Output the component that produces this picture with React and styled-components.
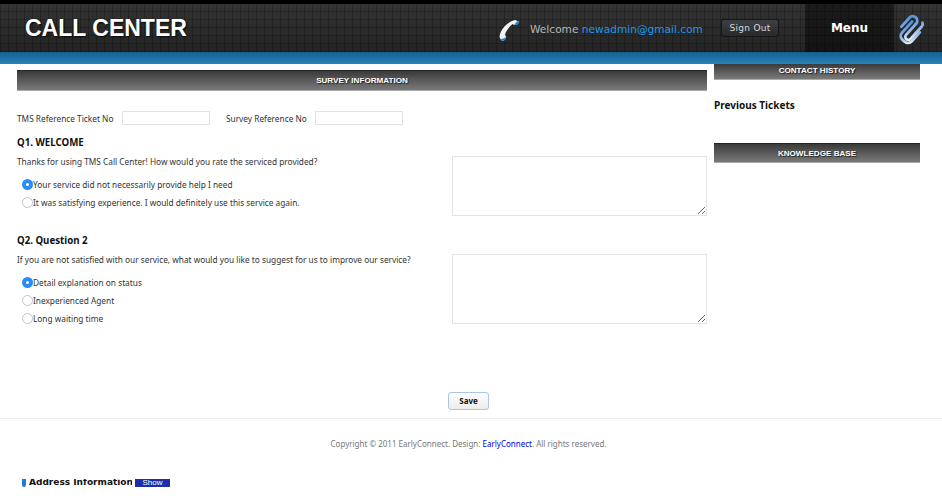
import React from 'react';
import styled, { createGlobalStyle } from 'styled-components';

const GlobalStyle = createGlobalStyle`
  html, body {
    margin: 0;
    padding: 0;
    background: #ffffff;
  }
  body {
    font-family: "Noto Sans", Verdana, sans-serif;
    font-size: 8.3px;
    color: #333333;
    height: 500px;
    overflow: hidden;
  }
`;

const Header = styled.header`
  border-top: 4px solid #000000;
`;

const TopBar = styled.div`
  height: 48px;
  display: flex;
  align-items: stretch;
  background-color: #262626;
  background-image:
    repeating-linear-gradient(90deg, rgba(0, 0, 0, 0.22) 0 1px, transparent 1px 8px),
    repeating-linear-gradient(0deg, rgba(0, 0, 0, 0.22) 0 1px, transparent 1px 8px),
    linear-gradient(180deg, #333333, #242424);
`;

const BlueBand = styled.div`
  height: 12px;
  background: linear-gradient(180deg, #14608f, #2b80bb);
`;

const Title = styled.h1`
  margin: 0 0 0 25px;
  width: 473px;
  align-self: center;
  font: bold 23px/30px "Liberation Sans", Arial, sans-serif;
  color: #ffffff;
  text-shadow: 1px 1px 2px rgba(0, 0, 0, 0.8);
`;

const PhoneIcon = styled.svg`
  width: 22px;
  height: 24px;
  margin: 15px 10px 0 0;
  flex: none;
`;

const Welcome = styled.div`
  width: 191px;
  align-self: center;
  font-family: "DejaVu Sans", Verdana, sans-serif;
  font-size: 10.6px;
  color: #b5b5b5;
  white-space: nowrap;
  padding-top: 1px;

  span {
    color: #1c96f0;
  }
`;

const SignOut = styled.button`
  width: 58px;
  height: 18px;
  align-self: center;
  padding: 0;
  border: 1px solid #151515;
  border-radius: 3px;
  background: linear-gradient(180deg, #3d4045, #26282c);
  color: #d8d8d8;
  font-family: "DejaVu Sans", Verdana, sans-serif;
  font-size: 9px;
  letter-spacing: 0.3px;
`;

const MenuCell = styled.div`
  width: 89px;
  margin-left: 26px;
  display: flex;
  align-items: center;
  justify-content: center;
  background: rgba(0, 0, 0, 0.45);
  color: #ffffff;
  font-family: "DejaVu Sans", Verdana, sans-serif;
  font-size: 12px;
  font-weight: bold;
`;

const ClipIcon = styled.svg`
  width: 32px;
  height: 32px;
  margin: 9px 0 0 1px;
  flex: none;
`;

const Main = styled.main`
  display: flex;
  gap: 7px;
  margin-left: 17px;
`;

const LeftColumn = styled.section`
  width: 690px;
  padding-top: 6px;
`;

const RightColumn = styled.aside`
  width: 206px;
`;

const SectionBar = styled.div`
  height: ${({ $height }) => $height}px;
  text-align: center;
  box-sizing: border-box;
  border-top: ${({ $flat }) => ($flat ? '0' : '1px solid #222222')};
  border-bottom: 1px solid #aaaaaa;
  background: linear-gradient(180deg, #3a3a3a, #7a7a7a);
  color: #ffffff;
  font: bold 8.1px "Liberation Sans", Arial, sans-serif;
  line-height: ${({ $lineHeight }) => $lineHeight}px;
  text-shadow: 1px 1px 1px rgba(0, 0, 0, 0.7);
`;

const RefRow = styled.div`
  display: flex;
  align-items: center;
  height: 14px;
  margin-top: 20px;
  white-space: nowrap;
`;

const RefLabel = styled.label`
  width: ${({ $width }) => $width}px;
  flex: none;
`;

const RefInput = styled.input`
  box-sizing: border-box;
  height: 14px;
  width: ${({ $width }) => $width}px;
  margin: 0 16px 0 0;
  padding: 0;
  border: 1px solid #e2e2e2;
  background: #ffffff;
`;

const QuestionGrid = styled.div`
  display: grid;
  grid-template-columns: 435px 255px;
  margin-top: ${({ $top }) => $top}px;
`;

const QuestionTitle = styled.h3`
  margin: 0;
  height: 14px;
  font-size: 9.7px;
  line-height: 16px;
  font-weight: bold;
  color: #111111;
`;

const QuestionText = styled.p`
  margin: 7px 0 7px;
  height: 12px;
  line-height: 12px;
  white-space: nowrap;
`;

const Option = styled.label`
  display: flex;
  align-items: center;
  height: 18px;
  padding-left: 5px;
`;

const Radio = styled.input`
  appearance: none;
  box-sizing: border-box;
  width: 11px;
  height: 11px;
  margin: 0;
  flex: none;
  border-radius: 50%;
  border: 1px solid #c4c4c4;
  background: #ffffff;

  &:checked {
    border: 4px solid #2a8cf4;
  }
`;

const AnswerBox = styled.textarea`
  box-sizing: border-box;
  display: block;
  width: 255px;
  height: ${({ $height }) => $height}px;
  margin-top: ${({ $top }) => $top}px;
  padding: 0;
  border: 1px solid #e4e4e4;
  background: #ffffff;
`;

const SideHeading = styled.h3`
  margin: 19px 0 32px;
  font-size: 10px;
  line-height: 12px;
  color: #111111;
`;

const SaveRow = styled.div`
  display: flex;
  justify-content: center;
  margin-top: 65px;
  width: 937px;
`;

const SaveButton = styled.button`
  box-sizing: border-box;
  width: 41px;
  height: 18px;
  padding: 0 0 2px;
  border: 1px solid #a9c4e4;
  border-radius: 3px;
  background: linear-gradient(180deg, #ffffff, #ececec);
  color: #111111;
  font: bold 8px "Noto Sans", Verdana, sans-serif;
`;

const Footer = styled.footer`
  margin-top: 8px;
  height: 47px;
  line-height: 49px;
  border-top: 1px solid #efefef;
  text-align: center;
  font-size: 8px;
  color: #777777;

  span {
    display: block;
    width: 937px;
  }

  a {
    color: #0000dd;
    text-decoration: none;
  }
`;

const AddressRow = styled.div`
  display: flex;
  align-items: flex-start;
  height: 9px;
  margin: 13px 0 0 22px;
`;

const AddressMark = styled.span`
  width: 4px;
  height: 8px;
  margin-right: 3px;
  border-radius: 0 0 2px 2px;
  background: #1c7fd0;
`;

const AddressTitle = styled.span`
  display: block;
  overflow: hidden;
  width: 103px;
  height: 7px;
  font-family: "DejaVu Sans", Verdana, sans-serif;
  font-size: 9px;
  line-height: 6px;
  font-weight: bold;
  color: #111111;
  white-space: nowrap;
`;

const ShowBadge = styled.span`
  width: 35px;
  height: 8px;
  margin-left: 3px;
  text-align: center;
  background: #1c2fa8;
  color: #ffffff;
  font: 8px/8px "Liberation Sans", Arial, sans-serif;
`;

const App = () => (
  <>
    <GlobalStyle />
    <Header>
      <TopBar>
        <Title>CALL CENTER</Title>
        <PhoneIcon viewBox="0 0 22 24">
          <path d="M1.5 18 C2 11 9 3 17 1 L21 2.5 C21 5 18.5 6.5 16 6 L14.5 5 C11 8 8 12 7 15.5 L8 17.5 C8 20.5 6 22 3.5 22 Z" fill="#f2f2f2" />
          <path d="M16 6 C18.5 6.5 21 5 21 2.5 L19.5 2 Z" fill="#1c7fd0" />
          <path d="M2.5 20.5 L3.5 22 C6 22 7.5 20.5 8 18.5 Z" fill="#1c7fd0" />
        </PhoneIcon>
        <Welcome>Welcome <span>newadmin@gmail.com</span></Welcome>
        <SignOut>Sign Out</SignOut>
        <MenuCell>Menu</MenuCell>
        <ClipIcon viewBox="0 0 32 32" fill="none" strokeLinecap="round">
          <defs>
            <linearGradient id="clipFill" x1="0" y1="0" x2="1" y2="1">
              <stop offset="0" stopColor="#4f8fdc" />
              <stop offset="0.6" stopColor="#8fb6e6" />
              <stop offset="1" stopColor="#f2f6fc" />
            </linearGradient>
          </defs>
          <g transform="rotate(42 15 16)" stroke="url(#clipFill)" strokeWidth="2.8">
            <path d="M7 20 V8 a4.5 4.5 0 0 1 9 0 V23 a3 3 0 0 0 6 0 V6 a3.5 3.5 0 0 0 -2 -3" />
            <path d="M11.5 9 V24 a5 5 0 0 0 5 5 h3 a5 5 0 0 0 5 -5 V12" />
          </g>
        </ClipIcon>
      </TopBar>
      <BlueBand />
    </Header>
    <Main>
      <LeftColumn>
        <SectionBar $height={21} $lineHeight={20}>SURVEY INFORMATION</SectionBar>
        <RefRow>
          <RefLabel $width={105}>TMS Reference Ticket No</RefLabel>
          <RefInput $width={88} />
          <RefLabel $width={89}>Survey Reference No</RefLabel>
          <RefInput $width={88} />
        </RefRow>
        <QuestionGrid $top={10}>
          <div>
            <QuestionTitle>Q1. WELCOME</QuestionTitle>
            <QuestionText>Thanks for using TMS Call Center! How would you rate the serviced provided?</QuestionText>
            <Option><Radio type="radio" name="q1" defaultChecked />Your service did not necessarily provide help I need</Option>
            <Option><Radio type="radio" name="q1" />It was satisfying experience. I would definitely use this service again.</Option>
          </div>
          <AnswerBox $height={60} $top={21} />
        </QuestionGrid>
        <QuestionGrid $top={17}>
          <div>
            <QuestionTitle>Q2. Question 2</QuestionTitle>
            <QuestionText>If you are not satisfied with our service, what would you like to suggest for us to improve our service?</QuestionText>
            <Option><Radio type="radio" name="q2" defaultChecked />Detail explanation on status</Option>
            <Option><Radio type="radio" name="q2" />Inexperienced Agent</Option>
            <Option><Radio type="radio" name="q2" />Long waiting time</Option>
          </div>
          <AnswerBox $height={70} $top={21} />
        </QuestionGrid>
      </LeftColumn>
      <RightColumn>
        <SectionBar $flat $height={16} $lineHeight={13}>CONTACT HISTORY</SectionBar>
        <SideHeading>Previous Tickets</SideHeading>
        <SectionBar $height={20} $lineHeight={19}>KNOWLEDGE BASE</SectionBar>
      </RightColumn>
    </Main>
    <SaveRow><SaveButton>Save</SaveButton></SaveRow>
    <Footer><span>Copyright © 2011 EarlyConnect. Design: <a href="#top">EarlyConnect</a>. All rights reserved.</span></Footer>
    <AddressRow>
      <AddressMark />
      <AddressTitle>Address Information</AddressTitle>
      <ShowBadge>Show</ShowBadge>
    </AddressRow>
  </>
);

export default App;
